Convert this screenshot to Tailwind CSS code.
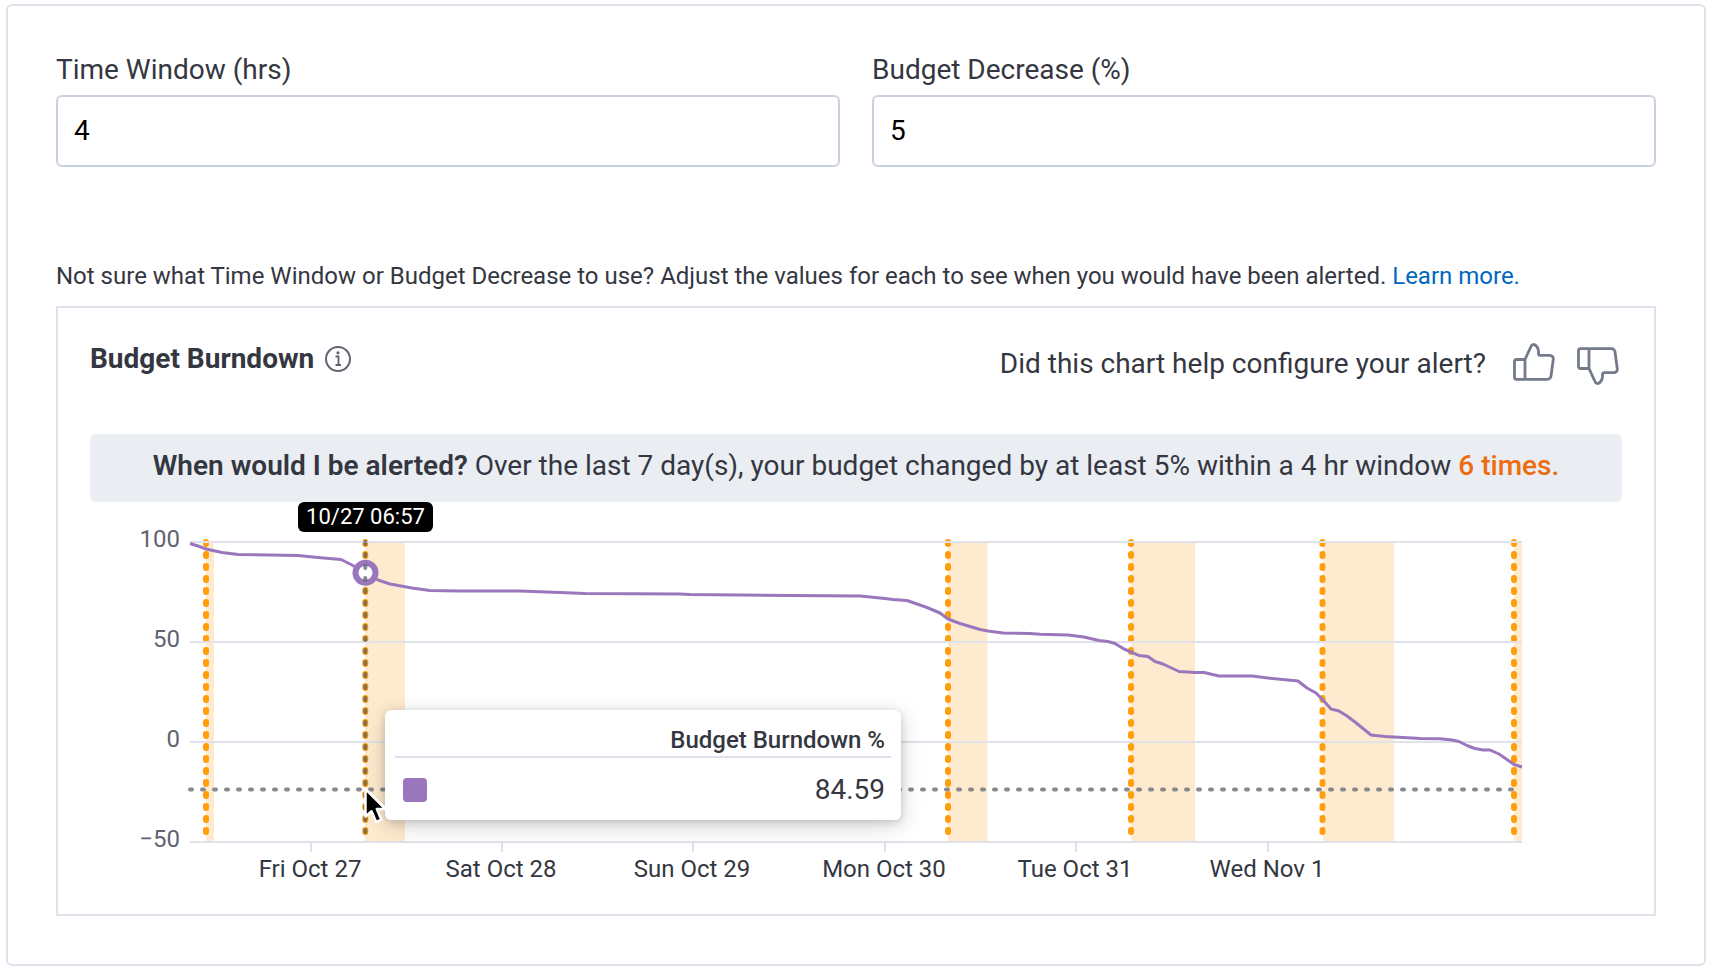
<!DOCTYPE html>
<html lang="en">
<head>
<meta charset="utf-8">
<meta name="viewport" content="width=device-width, initial-scale=1">
<title>Budget Burndown Alert</title>
<script src="https://cdn.jsdelivr.net/npm/@tailwindcss/browser@4"></script>
</head>
<body class="bg-white font-['Roboto',sans-serif] text-[#343741]">
<main class="pt-1 pr-1 pb-1.5 pl-1.5">
  <section class="rounded-md border-2 border-[#e0e1ec] px-12 pt-[46px] pb-12">
    <form class="grid grid-cols-2 gap-8">
      <div class="flex flex-col gap-[7px]">
        <label for="window" class="text-[28px] leading-9">Time Window (hrs)</label>
        <input id="window" type="text" inputmode="numeric" value="4" class="h-[72px] w-full rounded-md border-2 border-[#c9d0de] px-4 pb-0.5 text-[28px] text-black">
      </div>
      <div class="flex flex-col gap-[7px]">
        <label for="decrease" class="text-[28px] leading-9">Budget Decrease (%)</label>
        <input id="decrease" type="text" inputmode="numeric" value="5" class="h-[72px] w-full rounded-md border-2 border-[#c9d0de] px-4 pb-0.5 text-[28px] text-black">
      </div>
    </form>

    <p class="mt-[93px] text-2xl leading-8">Not sure what Time Window or Budget Decrease to use? Adjust the values for each to see when you would have been alerted. <a href="#" class="text-[#0068bd]">Learn more.</a></p>

    <section class="mt-3.5 border-2 border-[#e0e1ec] px-8 pt-8 pb-5">
      <header class="flex items-start justify-between">
        <h2 class="flex items-center gap-[11px] pt-px text-[28px] leading-9 font-bold">Budget Burndown
          <svg class="size-7" viewBox="0 0 28 28" fill="none" stroke="#5f6470" aria-hidden="true">
            <circle cx="13" cy="14" r="12" stroke-width="2"/>
            <path d="M10.500 11.500h3v8M10.500 20h5.500" stroke-width="1.800"/>
            <circle cx="13" cy="7.800" r="1.600" fill="#5f6470" stroke="none"/>
          </svg>
        </h2>
        <div class="flex h-[46px] items-center pr-0.5">
          <p class="mr-[26px] pt-0.5 text-[28px] leading-9">Did this chart help configure your alert?</p>
          <div class="flex gap-5">
            <button type="button" aria-label="Yes, it helped">
              <svg class="block h-[46px] w-11 overflow-visible" viewBox="0 0 44 46" fill="none" stroke="#737b8a" stroke-width="2.800" stroke-linejoin="round">
                <path d="M13 19.500H4.500a2 2 0 0 0-2 2V37.300a2 2 0 0 0 2 2H35.500a3.500 3.500 0 0 0 3.500-3.300L41.300 19.300a3.500 3.500 0 0 0-3.500-4H28.300a1.800 1.800 0 0 1-1.800-1.800Q27 7.500 23 5a2.600 2.600 0 0 0-4 1.500ZV39.300"/>
              </svg>
            </button>
            <button type="button" aria-label="No, it did not help">
              <svg class="block h-[46px] w-11 overflow-visible" viewBox="0 0 44 46" fill="none" stroke="#737b8a" stroke-width="2.800" stroke-linejoin="round">
                <path transform="matrix(1 0 0 -1 0 48)" d="M13 19.500H4.500a2 2 0 0 0-2 2V37.300a2 2 0 0 0 2 2H35.500a3.500 3.500 0 0 0 3.500-3.300L41.300 19.300a3.500 3.500 0 0 0-3.500-4H28.300a1.800 1.800 0 0 1-1.800-1.800Q27 7.500 23 5a2.600 2.600 0 0 0-4 1.500ZV39.300"/>
              </svg>
            </button>
          </div>
        </div>
      </header>

      <p class="mt-12 rounded-md bg-[#eaedf2] px-4 pt-3.5 pb-[18px] text-center text-[28px] leading-9"><strong class="font-semibold">When would I be alerted?</strong> Over the last 7 day(s), your budget changed by at least 5% within a 4 hr window <strong class="font-medium text-[#ee6c0e]">6 times.</strong></p>

      <div class="relative">
        <svg class="block w-full" viewBox="90 502 1532 392" role="img" aria-label="Budget burndown chart">
          <!-- alert ranges -->
          <g fill="#feebcf">
            <rect x="206" y="542" width="8" height="300"/>
            <rect x="365" y="542" width="40" height="300"/>
            <rect x="948" y="542" width="39.500" height="300"/>
            <rect x="1131" y="542" width="64" height="300"/>
            <rect x="1323" y="542" width="71" height="300"/>
            <rect x="1514" y="542" width="8" height="300"/>
          </g>
          <!-- threshold -->
          <path d="M190 789.500H1513" stroke="#88898f" stroke-width="4" stroke-linecap="round" stroke-dasharray="2 10"/>
          <!-- alert starts -->
          <path d="M206 542V841M365.300 542V841M948 542V841M1131 542V841M1322.500 542V841M1514 542V841" stroke="#ff9d0a" stroke-width="6" stroke-linecap="round" stroke-dasharray="2 10"/>
          <!-- grid and axis -->
          <path d="M190 542H1522M190 642H1522M190 742H1522M190 842H1522M311 842V852M502 842V852M693 842V852M885 842V852M1076 842V852M1268 842V852" stroke="#e0e1e9" stroke-width="2"/>
          <polyline fill="none" stroke="#9a77bd" stroke-width="3" stroke-linejoin="round" points="190,543.500 198,546 206,549 222,552.500 238,554.500 270,555 298,555.500 318,557.500 341,559.500 352,565 365,573 378,580 390,584 412,588 430,590.500 460,591 520,591 560,592.500 585,593.500 680,594 690,594.500 790,595.500 860,596 875,597.500 885,598.500 893,599.500 907,600.500 917,604 927,607.500 940,613 948,619 960,623.500 980,629.500 988,631 1003,633 1030,633.500 1040,634.300 1068,635 1084,637 1099,640.500 1108,641.500 1115,643.500 1124,649 1131,652 1139,655.500 1148,656.500 1155,661.500 1163,664 1179,671.500 1195,672.500 1204,672.500 1219,676 1252,676 1268,678 1298,681 1307,688 1316,693 1323,700 1331,709 1339,711 1347,716 1355,722 1371,735 1385,736.500 1412,738 1420,738.500 1440,738.800 1452,740 1459,741.500 1468,746 1475,748.500 1483,750 1490,750 1499,754 1507,759.500 1514,764.500 1522,767"/>
          <circle cx="365.500" cy="572.700" r="10" fill="#fff" stroke="#9a77bd" stroke-width="6"/>
          <!-- hover line -->
          <path d="M365.300 542V841" stroke="#5c616e" stroke-opacity=".75" stroke-width="4" stroke-linecap="round" stroke-dasharray="2 10"/>
          <g class="text-2xl" fill="#5f6470" text-anchor="end">
            <text x="180" y="547">100</text>
            <text x="180" y="647">50</text>
            <text x="180" y="747">0</text>
            <text x="180" y="847">−50</text>
          </g>
          <g class="text-2xl" fill="#343741" text-anchor="middle">
            <text x="310" y="877">Fri Oct 27</text>
            <text x="501" y="877">Sat Oct 28</text>
            <text x="692" y="877">Sun Oct 29</text>
            <text x="884" y="877">Mon Oct 30</text>
            <text x="1075" y="877">Tue Oct 31</text>
            <text x="1267" y="877">Wed Nov 1</text>
          </g>
        </svg>

        <div class="absolute top-0 left-[208px] h-[30px] w-[135px] rounded-md bg-black text-center text-[22px] leading-[30px] text-white">10/27 06:57</div>

        <div class="absolute top-[208px] left-[295px] w-[516px] rounded-md bg-white px-2.5 shadow-[0_6px_24px_rgba(0,0,0,0.16),0_2px_8px_rgba(0,0,0,0.16)]">
          <div class="border-b-2 border-[#e0e1ec] pt-3.5 pr-1.5 text-right text-2xl leading-8 font-medium">Budget Burndown %</div>
          <div class="flex h-[62px] items-center justify-between pt-0.5 pr-1.5 pl-2">
            <span class="size-6 rounded-sm bg-[#9a77bd]"></span>
            <span class="text-[28px] leading-9">84.59</span>
          </div>
        </div>

        <svg class="absolute top-[282px] left-[272px] h-10 w-7" viewBox="0 0 28 40" aria-hidden="true">
          <path d="M3.500 5V32.500L9.500 27.200L14.200 38L19.400 35.700L14.800 25H23.500Z" fill="#000" stroke="#fff" stroke-width="2.500" stroke-linejoin="round"/>
        </svg>
      </div>
    </section>
  </section>
</main>
</body>
</html>
